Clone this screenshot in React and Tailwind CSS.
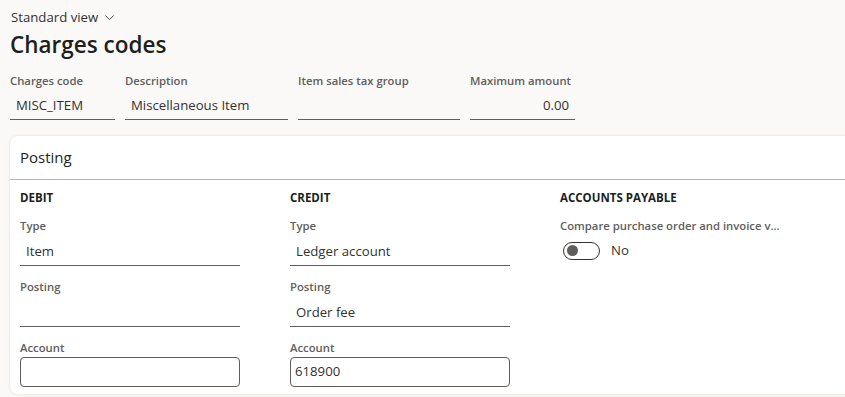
import React from 'react';

const font = { fontFamily: '"Segoe UI", "Open Sans", "Liberation Sans", sans-serif' };

const Label = ({ children }) => (
    <div className="text-[11.3px] leading-[16px] text-[#605e5c] font-semibold whitespace-nowrap">{children}</div>
);

const LineField = ({ label, value, width, right, tall }) => (
    <div className={`flex flex-col ${width}`}>
        <Label>{label}</Label>
        <div className={`${tall ? 'h-[30px]' : 'h-[29px]'} mt-[2px] pt-[2px] border-b border-[#605e5c] flex items-center px-[6px] text-[13.2px] text-[#323130] ${right ? 'justify-end' : ''}`}>
            {value}
        </div>
    </div>
);

const BoxField = ({ label, value }) => (
    <div className="flex flex-col w-[220px]">
        <Label>{label}</Label>
        <div className="h-[30px] mt-[1px] border border-[#605e5c] rounded-[4px] flex items-center px-[4px] text-[13.2px] text-[#323130]">
            {value}
        </div>
    </div>
);

const Column = ({ title, children }) => (
    <div className="flex flex-col w-[270px]">
        <div className="text-[11.5px] font-bold text-[#201f1e] leading-[16px] mb-[12px]">{title}</div>
        <div className="flex flex-col gap-[13px]">{children}</div>
    </div>
);

const App = () => {
    return (
        <div className="w-[845px] h-[397px] overflow-hidden bg-[#faf9f8]" style={font}>
            <div className="pl-[11px] pt-[8px] h-[27px] flex items-center gap-[6px] text-[13.2px] text-[#323130]">
                Standard view
                <svg width="11" height="11" viewBox="0 0 12 12" fill="none" stroke="#323130" strokeWidth="1">
                    <path d="M1.5 3.8 L6 8.3 L10.5 3.8" />
                </svg>
            </div>
            <h1 className="pl-[10px] mt-[2px] text-[22.5px] leading-[32px] font-semibold text-[#201f1e]">Charges codes</h1>

            <div className="flex gap-[10px] pl-[10px] mt-[12px]">
                <LineField label="Charges code" value="MISC_ITEM" width="w-[105px]" />
                <LineField label="Description" value="Miscellaneous Item" width="w-[163px]" />
                <LineField label="Item sales tax group" value="" width="w-[162px]" />
                <LineField label="Maximum amount" value="0.00" width="w-[105px]" right />
            </div>

            <div className="ml-[10px] mt-[16px] w-[860px] h-[258px] bg-white rounded-[8px] shadow-[0_0_3px_rgba(0,0,0,0.12)]">
                <div className="h-[44px] border-b border-[#b8b6b4] flex items-center pl-[10px] text-[15px] text-[#201f1e]">
                    Posting
                </div>
                <div className="flex pl-[10px] pt-[10px]">
                    <Column title="DEBIT">
                        <LineField label="Type" value="Item" width="w-[220px]" tall />
                        <LineField label="Posting" value="" width="w-[220px]" tall />
                        <BoxField label="Account" value="" />
                    </Column>
                    <Column title="CREDIT">
                        <LineField label="Type" value="Ledger account" width="w-[220px]" tall />
                        <LineField label="Posting" value="Order fee" width="w-[220px]" tall />
                        <BoxField label="Account" value="618900" />
                    </Column>
                    <Column title="ACCOUNTS PAYABLE">
                        <div className="flex flex-col">
                            <Label>Compare purchase order and invoice v...</Label>
                            <div className="flex items-center gap-[11px] mt-[7px] pl-[3px]">
                                <div className="w-[37px] h-[18px] rounded-full border border-[#323130] flex items-center px-[3px]">
                                    <div className="w-[11px] h-[11px] rounded-full bg-[#605e5c]" />
                                </div>
                                <span className="text-[13.2px] text-[#323130]">No</span>
                            </div>
                        </div>
                    </Column>
                </div>
            </div>
        </div>
    );
};

export default App;
